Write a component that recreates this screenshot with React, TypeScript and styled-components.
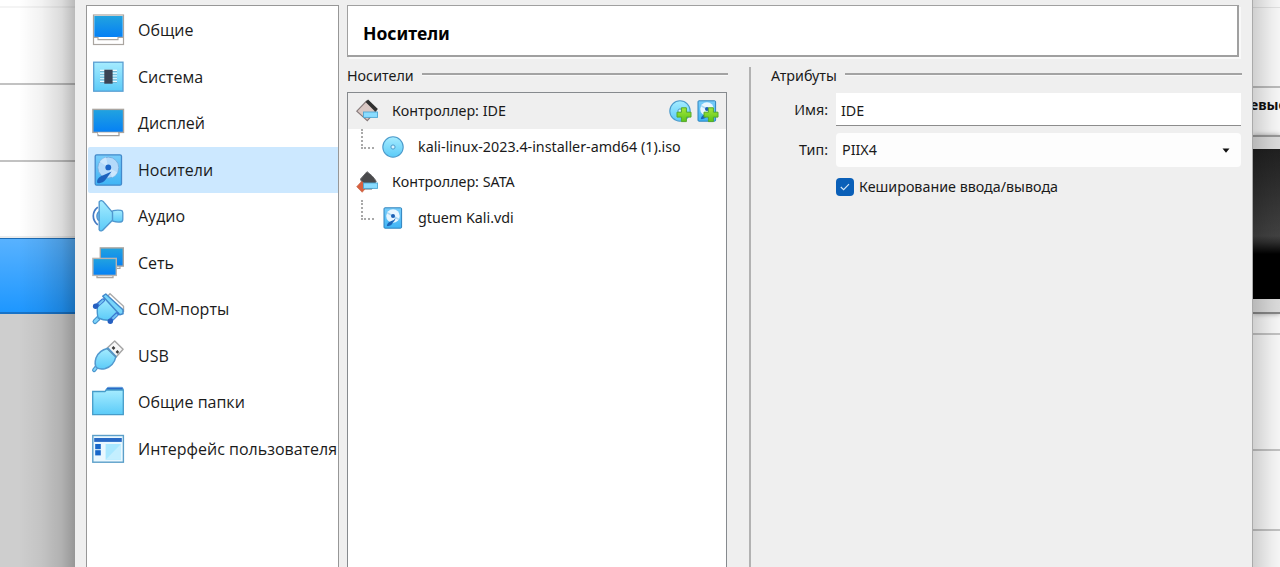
import React from "react";
import styled, { createGlobalStyle } from "styled-components";

const GlobalStyle = createGlobalStyle`
  * { box-sizing: border-box; }
  html, body { margin: 0; padding: 0; }
  body { overflow: hidden; background: #efefef; }
`;

const ui = `"Open Sans", "Noto Sans", sans-serif`;
const tahoma = `"Noto Sans", "Open Sans", sans-serif`;

const Screen = styled.div`
  display: flex;
  width: 1280px;
  height: 567px;
  overflow: hidden;
`;

/* Manager window behind the dialog, left edge */
const MachineList = styled.div`
  position: relative;
  display: flex;
  flex-direction: column;
  flex: 0 0 75px;
  background: #cecece;
  &::after {
    content: "";
    position: absolute;
    inset: 0;
    background: linear-gradient(to right, transparent 25%, rgba(0, 0, 0, 0.05) 55%, rgba(0, 0, 0, 0.14) 82%, rgba(0, 0, 0, 0.27) 100%);
  }
`;
const MachineRow = styled.div<{ $h: number; $line?: string }>`
  height: ${(p) => p.$h}px;
  background: #fff;
  border-bottom: 2px solid ${(p) => p.$line ?? "#c2c2c2"};
`;
const MachineSelected = styled.div`
  height: 76px;
  background: linear-gradient(#58b2ff, #1e97ff);
  border-top: 1px solid #1d6cb4;
  border-bottom: 2px solid #1873c8;
`;

/* Manager window behind the dialog, right edge */
const Details = styled.div`
  position: relative;
  display: flex;
  flex-direction: column;
  flex: 1;
  overflow: hidden;
  background: #fafafa;
  &::after {
    content: "";
    position: absolute;
    inset: 0;
    background: linear-gradient(to right, rgba(0, 0, 0, 0.17), rgba(0, 0, 0, 0.05) 70%, rgba(0, 0, 0, 0.02));
  }
`;
const DetailsBlock = styled.div<{ $h: number; $line: string; $w?: number }>`
  height: ${(p) => p.$h}px;
  border-bottom: ${(p) => p.$w ?? 2}px solid ${(p) => p.$line};
`;
const PreviewTitle = styled.div`
  height: 47px;
  padding-top: 8px;
  font: 700 14px/18px ${tahoma};
  color: #101010;
  white-space: nowrap;
  margin-left: -3px;
`;
const Preview = styled.div`
  height: 179px;
  padding: 12px 0 13px;
  background: #dedede;
  border-top: 2px solid #999;
  border-bottom: 2px solid #888;
  box-shadow: 0 0 5px rgba(0, 0, 0, 0.35);
`;
const PreviewScreen = styled.div`
  height: 150px;
  background: linear-gradient(#202020, #424242 58%, #303030 62%, #000 70%);
`;

const Dialog = styled.div`
  display: flex;
  flex: 0 0 1178px;
  gap: 8px;
  padding: 5px 10px 0 11px;
  background: #efefef;
  border-right: 1px solid #aaa;
`;

const Sidebar = styled.nav`
  flex: 0 0 253px;
  padding: 1px 0 0 1px;
  background: #fff;
  border: 1px solid #979797;
  border-bottom: 0;
`;
const SidebarItem = styled.div<{ $active?: boolean }>`
  display: flex;
  align-items: center;
  gap: 14px;
  height: 46.5px;
  padding-left: 4px;
  background: ${(p) => (p.$active ? "#cce8ff" : "transparent")};
  border-radius: 2px 0 0 2px;
  color: #1b1b1b;
  font: 400 16px/24px ${ui};
  white-space: nowrap;
`;
const Label = styled.span<{ $track?: number }>`
  letter-spacing: ${(p) => p.$track ?? 0}px;
`;
const Icon = styled.svg`
  display: block;
  flex: none;
  overflow: visible;
`;

const Main = styled.main`
  flex: 1;
  min-width: 0;
  display: flex;
  flex-direction: column;
`;
const Header = styled.h1`
  width: 892px;
  height: 52px;
  margin: 0;
  padding: 0 15px;
  background: #fff;
  border: 1px solid #a0a0a0;
  border-width: 1px 2px 2px 1px;
  box-shadow: 2px 2px 0 #f9f9f9;
  font: 700 17.5px/54px ${tahoma};
  color: #000;
`;
const Panels = styled.div`
  display: flex;
  flex: 1;
  padding-top: 10px;
`;
const Group = styled.section<{ $w: number }>`
  display: flex;
  flex-direction: column;
  flex: 0 0 ${(p) => p.$w}px;
`;
const GroupTitle = styled.h2`
  display: flex;
  align-items: center;
  gap: 8px;
  height: 18px;
  margin: 0;
  font: 400 14.3px/18px ${tahoma};
  color: #1a1a1a;
  white-space: nowrap;
  &::after {
    content: "";
    flex: 1;
    height: 2px;
    margin-bottom: 4px;
    background: #a3a3a3;
    box-shadow: 0 1px 0 #f8f8f8;
  }
`;
const Splitter = styled.div`
  width: 2px;
  margin: 0 20px 0 21px;
  background: #b2b2b2;
`;
const Tree = styled.div`
  flex: 1;
  width: 380px;
  margin-top: 7px;
  background: #fff;
  border: 1px solid #868a8e;
  border-bottom: 0;
`;
const TreeRow = styled.div<{ $selected?: boolean }>`
  display: flex;
  align-items: center;
  height: 35.8px;
  padding: 0 8px;
  background: ${(p) => (p.$selected ? "#efefef" : "transparent")};
  font: 400 14.3px/20px ${tahoma};
  color: #1a1a1a;
  white-space: nowrap;
`;
const TreeText = styled(Label)<{ $gap: number }>`
  flex: 1;
  margin-left: ${(p) => p.$gap}px;
`;
const Branch = styled.div`
  align-self: flex-start;
  width: 13px;
  height: 20px;
  margin: 0 8px 0 5px;
  border-left: 2px dotted #a9a9a9;
  border-bottom: 2px dotted #a9a9a9;
`;
const Actions = styled.div`
  display: flex;
  gap: 5px;
`;

const Form = styled.div`
  display: grid;
  grid-template-columns: 57px 405px;
  column-gap: 8px;
  row-gap: 7px;
  padding-top: 8px;
  font: 400 14.3px/20px ${tahoma};
  color: #1a1a1a;
`;
const FieldLabel = styled.div`
  align-self: center;
  text-align: right;
`;
const NameField = styled.div`
  height: 33px;
  padding: 0 5px;
  line-height: 35px;
  background: #fff;
  border-bottom: 1px solid #8c8c8c;
`;
const Select = styled.div`
  display: flex;
  align-items: center;
  justify-content: space-between;
  height: 34px;
  padding: 0 11px 0 6px;
  background: #fdfdfd;
  border-radius: 4px;
`;
const CheckRow = styled.div`
  grid-column: 2;
  display: flex;
  align-items: center;
  gap: 5px;
  height: 20px;
  margin-top: 3px;
  white-space: nowrap;
`;
const CheckBox = styled.span`
  display: grid;
  place-items: center;
  width: 18px;
  height: 18px;
  border-radius: 4px;
  background: #0a5fb8;
`;

const Defs = () => (
  <svg width="0" height="0" style={{ position: "absolute" }}>
    <defs>
      <linearGradient id="scr" x1="0" y1="0" x2="0" y2="1">
        <stop offset="0" stopColor="#22a3df" />
        <stop offset="1" stopColor="#0580f5" />
      </linearGradient>
      <linearGradient id="sky" x1="0" y1="0" x2="0" y2="1">
        <stop offset="0" stopColor="#a6ecff" />
        <stop offset="1" stopColor="#5bcbf8" />
      </linearGradient>
      <linearGradient id="disk" x1="0" y1="0" x2="0" y2="1">
        <stop offset="0" stopColor="#79cdfa" />
        <stop offset="1" stopColor="#3fb4f5" />
      </linearGradient>
      <linearGradient id="green" x1="0" y1="0" x2="0" y2="1">
        <stop offset="0" stopColor="#a4e83a" />
        <stop offset="1" stopColor="#5cc41c" />
      </linearGradient>
    </defs>
  </svg>
);

const I32 = ({ children }: { children: React.ReactNode }) => (
  <Icon width="32" height="32" viewBox="0 0 32 32">{children}</Icon>
);

const GeneralIcon = () => (
  <I32>
    <rect x="1.5" y="1" width="30" height="29.5" fill="#fff" stroke="#aaa5a0" strokeWidth="1.2" />
    <rect x="2.3" y="2" width="28.4" height="21" fill="url(#scr)" />
    <path d="M1.5 23.4h4.5v2.2h20v-2.2h5.5" fill="#fff" stroke="#aaa5a0" strokeWidth="1.1" />
  </I32>
);
const SystemIcon = () => (
  <I32>
    <rect x="1.7" y="1.2" width="29.3" height="29" fill="url(#sky)" stroke="#5a9ed2" strokeWidth="1.3" />
    <path d="M8 10.3h17M8 13.1h17M8 15.9h17M8 18.7h17M8 21.2h17" stroke="#6fa9c6" strokeWidth="1" />
    <path d="M8 9.4h17M8 12.2h17M8 15h17M8 17.8h17M8 20.4h17" stroke="#effbff" strokeWidth="1.1" />
    <rect x="12.3" y="8.7" width="8.3" height="14" fill="#3b4354" />
  </I32>
);
const DisplayIcon = () => (
  <I32>
    <path d="M6 24h21v4.7H6z" fill="#fff" stroke="#a09d9b" strokeWidth="1.2" />
    <rect x=".9" y="2.4" width="30.6" height="23" fill="url(#scr)" stroke="#aaa5a0" strokeWidth="1.4" />
    <path d="M6 26.3h20" stroke="#fff" strokeWidth="1.7" />
  </I32>
);
const StorageIcon = () => (
  <I32>
    <rect x="3.2" y=".8" width="26.3" height="30.4" rx="1.5" fill="url(#disk)" stroke="#4389ca" strokeWidth="1.3" />
    <circle cx="16.3" cy="13.6" r="10.5" fill="#b4dafa" stroke="#74aee0" strokeWidth=".9" />
    <path d="M16.3 13.6 7.6 7.5A10.5 10.5 0 0 1 14 3.3zM16.3 13.6l9.3 4.8a10.5 10.5 0 0 1-5.5 5z" fill="#d5ecfd" opacity=".7" />
    <circle cx="16.3" cy="13.4" r="2.9" fill="#1c66c8" />
    <path d="M19.6 17.6 9 22.2c-3.8 2-4.3 5-3.6 6.7 2.7.7 6.2-.2 7.9-2.8z" fill="#1d63bd" />
  </I32>
);
const AudioIcon = () => (
  <I32>
    <path d="M5.8 7.2C-.2 12-.2 20 5.8 24.9" fill="none" stroke="#4479c2" strokeWidth="1.7" />
    <path d="M9 11c-5.5 0-5.5 10 0 10z" fill="#75bdea" stroke="#4d91cf" strokeWidth="1.3" />
    <path d="M18.5 12.4c2.5-2.4 7-2.4 10.5-2 1.8.2 1.8 1.2 1.8 2.3v6.8c0 2-.8 2.4-2.4 2.5-3.6.3-7.2.2-9.9-2.2z" fill="url(#sky)" stroke="#5098cf" strokeWidth="1.3" />
    <path d="M7.2 1.8C8.3-.2 10.8.5 12 2.4l8.5 10v7.8L11.9 29c-1.2 1.8-3.7 2.8-4.7.8z" fill="url(#sky)" stroke="#5098cf" strokeWidth="1.4" />
  </I32>
);
const NetworkIcon = () => (
  <I32>
    <path d="M24 18v3.4h4V18" fill="#fff" stroke="#aaa5a0" strokeWidth="1.1" />
    <rect x="8.3" y=".9" width="23" height="18.2" fill="url(#scr)" stroke="#aaa5a0" strokeWidth="1.4" />
    <path d="M5 28.5v2h16v-2" fill="#fff" stroke="#aaa5a0" strokeWidth="1.3" />
    <rect x=".9" y="11.4" width="23.4" height="17" fill="url(#scr)" stroke="#b8b4b0" strokeWidth="1.4" />
  </I32>
);
const SerialIcon = () => (
  <I32>
    <path d="m15.2 3.8 2.8-3 13.5 12.4v5.2l-3.2 1z" fill="#fff" stroke="#aaa" strokeWidth="1.4" />
    <path d="m6 25.5-3 3" stroke="#4796cf" strokeWidth="5" strokeLinecap="round" />
    <path d="m6 25.5-3 3" stroke="#80d4fa" strokeWidth="2.6" strokeLinecap="round" />
    <path d="M5.5 12.8c-.4 5-.8 8.5.8 12.2 5 2.5 8.2 2.6 13.2 2.2L28 20 13.8 4.2z" fill="url(#sky)" stroke="#4796cf" strokeWidth="1.4" />
    <path d="m10.8 3.2 3-2.2L31 16.8v4l-3.2 1z" fill="#78d5fa" stroke="#4289cc" strokeWidth="1.5" strokeLinejoin="round" />
    <path d="m5 12.5 6-5.2M19 27l6-6" stroke="#3977cf" strokeWidth="4" strokeLinecap="round" />
    <path d="m7 11.2 4.5-4.3M20.5 25.8l4.7-4.6" stroke="#71c3f3" strokeWidth="2" />
    <circle cx="3.6" cy="13.3" r="2.7" fill="#255fc0" />
    <circle cx="18.3" cy="28.3" r="2.7" fill="#255fc0" />
  </I32>
);
const UsbIcon = () => (
  <I32>
    <path d="M22.7.9 31.1 9.2l-7.2 8-9.2-8.8z" fill="#f6f6f6" stroke="#a5a5a5" strokeWidth="1.4" strokeLinejoin="round" />
    <path d="m20.5 7 2 2M24.5 11l1.8 1.8" stroke="#3c3c3c" strokeWidth="2.5" />
    <path d="M5 26.5 2.2 30" stroke="#4995ce" strokeWidth="4.3" strokeLinecap="round" />
    <path d="M5 26.5 2.2 30" stroke="#86d8fb" strokeWidth="2" strokeLinecap="round" />
    <path d="M4 18c2-6 7-8.6 12-9.8l8 8.2c-1.4 6.2-5 10.8-11.2 12.3-3 .6-6 .4-8.2-1-1.8-2.4-1.6-6.5-.6-9.7z" fill="url(#sky)" stroke="#5299cf" strokeWidth="1.5" />
    <path d="M14.7 8.4 24 17.3" stroke="#5a90b8" strokeWidth="1.2" />
  </I32>
);
const FolderIcon = () => (
  <I32>
    <path d="M13 6.5c1.3-5 2.3-5.2 4.3-5.2h12c1.5 0 1.8.6 1.8 2v3.2z" fill="#2a69c6" stroke="#6ba8df" strokeWidth=".9" />
    <path d="M.7 5.5h12.2L14.5 4h16.8v24.6H.7z" fill="url(#sky)" stroke="#469cc9" strokeWidth="1.3" />
  </I32>
);
const InterfaceIcon = () => (
  <I32>
    <rect x=".8" y="2.5" width="30.6" height="26.7" fill="#e9f8ff" stroke="#5b9fc9" strokeWidth="1.4" />
    <rect x="2.2" y="5" width="27.6" height="3.9" fill="#2769c5" />
    <rect x="3.2" y="11" width="5.6" height="5.2" fill="#1767c9" />
    <rect x="3.2" y="17.2" width="5.6" height="5.2" fill="#1767c9" />
    <rect x="13.6" y="11" width="15.4" height="15.8" fill="#a9e8ff" />
    <path d="M29 11v15.8H13.6z" fill="#c4efff" />
  </I32>
);

const ControllerIcon = ({ sata }: { sata?: boolean }) => (
  <Icon width="22" height="22" viewBox="0 0 22 22">
    {sata ? (
      <>
        <path d="M4.5 8 11 .7c3.5 2.5 7 5.5 9.2 9.6L16 18H8z" fill="#4a4a4c" stroke="#69696c" />
        <path d="m.7 15.7 5-5.4 5.5 5-5 6z" fill="#d95f3d" stroke="#c46b50" strokeWidth=".7" />
      </>
    ) : (
      <>
        <path d="M.8 11.2 10.5 1l9.6 9.7-8.8 9.9z" fill="#dac8c4" stroke="#85797a" strokeWidth="1.1" />
        <path d="m10.8.8 9.8 9.6" stroke="#303030" strokeWidth="3.6" />
      </>
    )}
    <rect x="7.5" y="12" width="14" height="5.4" fill="#8adcff" stroke="#4ea6d2" strokeWidth=".9" />
  </Icon>
);
const Disc = () => (
  <>
    <circle cx="11" cy="11" r="10.2" fill="url(#sky)" stroke="#4b9acb" strokeWidth="1.1" />
    <circle cx="11" cy="11" r="2.1" fill="#d5f3ff" stroke="#4d9bcb" strokeWidth="1" />
  </>
);
const Drive = () => (
  <>
    <rect x="2" y=".8" width="17.6" height="20.4" rx="1" fill="url(#disk)" stroke="#2f83bd" strokeWidth="1" />
    <circle cx="11" cy="9" r="6.8" fill="#e8f6ff" />
    <path d="M11 9 5 5.6M11 9l6 3.5" stroke="#a9d8f5" strokeWidth="1.5" />
    <circle cx="11" cy="9" r="2" fill="#1c5fb4" />
    <path d="M13.3 10.8c-.5 2.2-2.3 2.5-4 3.3-2.3 1-4 2-4.5 5 3 .3 5-.7 5.8-3 .8-1.5 3-2.4 2.7-5.3z" fill="#1c65b9" />
  </>
);
const Plus = () => (
  <path d="M12.4 7.8h5v4.4h4.6v4.9h-4.6v4.5h-5v-4.5H8v-4.9h4.4z" fill="url(#green)" stroke="#55a82c" strokeWidth="1" />
);
const Small = ({ children }: { children: React.ReactNode }) => (
  <Icon width="22" height="22" viewBox="0 0 22 22">{children}</Icon>
);

const sections = [
  { name: "Общие", icon: <GeneralIcon />, track: 0 },
  { name: "Система", icon: <SystemIcon />, track: 0 },
  { name: "Дисплей", icon: <DisplayIcon />, track: 0 },
  { name: "Носители", icon: <StorageIcon />, track: 0, active: true },
  { name: "Аудио", icon: <AudioIcon />, track: 0 },
  { name: "Сеть", icon: <NetworkIcon />, track: 0 },
  { name: "COM-порты", icon: <SerialIcon />, track: 0 },
  { name: "USB", icon: <UsbIcon />, track: 0 },
  { name: "Общие папки", icon: <FolderIcon />, track: 0 },
  { name: "Интерфейс пользователя", icon: <InterfaceIcon />, track: 0 },
];

export default function App() {
  return (
    <Screen>
      <GlobalStyle />
      <Defs />
      <MachineList>
        <MachineRow $h={8} $line="#f4f4f4" />
        <MachineRow $h={77} />
        <MachineRow $h={77} />
        <MachineRow $h={76} $line="#ececec" />
        <MachineSelected />
      </MachineList>
      <Dialog>
        <Sidebar>
          {sections.map((s) => (
            <SidebarItem key={s.name} $active={s.active}>
              {s.icon}
              <Label $track={s.track}>{s.name}</Label>
            </SidebarItem>
          ))}
        </Sidebar>
        <Main>
          <Header>Носители</Header>
          <Panels>
            <Group $w={381}>
              <GroupTitle><Label>Носители</Label></GroupTitle>
              <Tree>
                <TreeRow $selected>
                  <ControllerIcon />
                  <TreeText $gap={14}>Контроллер: IDE</TreeText>
                  <Actions>
                    <Small><Disc /><Plus /></Small>
                    <Small><Drive /><Plus /></Small>
                  </Actions>
                </TreeRow>
                <TreeRow>
                  <Branch />
                  <Small><Disc /></Small>
                  <TreeText $gap={14}>kali-linux-2023.4-installer-amd64 (1).iso</TreeText>
                </TreeRow>
                <TreeRow>
                  <ControllerIcon sata />
                  <TreeText $gap={14}>Контроллер: SATA</TreeText>
                </TreeRow>
                <TreeRow>
                  <Branch />
                  <Small><Drive /></Small>
                  <TreeText $gap={14}>gtuem Kali.vdi</TreeText>
                </TreeRow>
              </Tree>
            </Group>
            <Splitter />
            <Group $w={471}>
              <GroupTitle><Label>Атрибуты</Label></GroupTitle>
              <Form>
                <FieldLabel>Имя:</FieldLabel>
                <NameField>IDE</NameField>
                <FieldLabel>Тип:</FieldLabel>
                <Select>
                  <Label>PIIX4</Label>
                  <Icon width="8" height="5" viewBox="0 0 8 5"><path d="M.5.5h7L4 4.7z" fill="#111" /></Icon>
                </Select>
                <CheckRow>
                  <CheckBox>
                    <Icon width="10" height="8" viewBox="0 0 10 8"><path d="m.8 4 2.8 2.7L9 1.2" fill="none" stroke="#d6e8f8" strokeWidth="1.1" /></Icon>
                  </CheckBox>
                  <Label>Кеширование ввода/вывода</Label>
                </CheckRow>
              </Form>
            </Group>
          </Panels>
        </Main>
      </Dialog>
      <Details>
        <DetailsBlock $h={8} $line="#e4e4e4" $w={1} />
        <DetailsBlock $h={80} $line="#bdbdbd" />
        <PreviewTitle>евые</PreviewTitle>
        <Preview><PreviewScreen /></Preview>
        <DetailsBlock $h={21} $line="#c4c4c4" />
        <DetailsBlock $h={116} $line="#c4c4c4" />
        <DetailsBlock $h={80} $line="#c4c4c4" />
      </Details>
    </Screen>
  );
}
